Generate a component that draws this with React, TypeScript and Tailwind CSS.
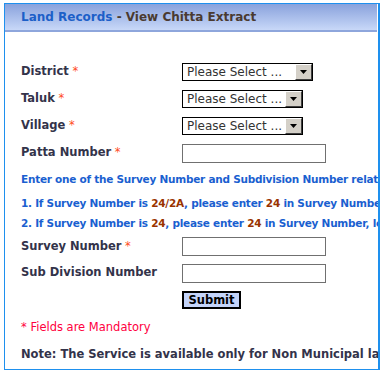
import React from 'react'

const font = { fontFamily: '"DejaVu Sans", Verdana, sans-serif' }

function Star() {
  return <span className="text-[#ff4a1c] font-normal"> *</span>
}

function FakeSelect({ width }: { width: string }) {
  return (
    <div className={`flex h-[18px] ${width} items-stretch border border-black bg-white`}>
      <span className="flex-1 pl-[4px] text-[12px] leading-[16px] text-[#333]">Please Select ...</span>
      <span className="flex w-[17px] items-center justify-center border-t border-l border-t-white border-l-white border-r border-b border-r-[#404040] border-b-[#404040] bg-[#d4d0c8]">
        <svg width="7" height="4" viewBox="0 0 7 4">
          <polygon points="0,0 7,0 3.5,4" fill="#000" />
        </svg>
      </span>
    </div>
  )
}

function TextBox() {
  return <div className="h-[19px] w-[144px] border border-[#707070] bg-white" />
}

function Row({ label, star, h, children }: { label: string; star?: boolean; h: string; children?: React.ReactNode }) {
  return (
    <div className={`flex ${h} items-center pt-[1px]`}>
      <div className="w-[161px] text-[11.5px] font-bold text-[#33334a]">
        {label}
        {star && <Star />}
      </div>
      {children}
    </div>
  )
}

const Num = ({ children }: { children: React.ReactNode }) => <span className="text-[#993300]">{children}</span>

export default function App() {
  return (
    <div className="h-[375px] w-[384px] bg-white pt-[3px] pl-[4px]" style={font}>
      <div className="h-[367px] w-[376px] overflow-hidden border border-r-2 border-[#1e90ee]">
        <div className="flex h-[28px] w-[372px] items-center border-b-2 border-[#8ea6dc] bg-gradient-to-b from-[#8aa2dc] to-[#c8d8f8] pl-[16px] text-[12px] font-bold">
          <span className="text-[#1c5fc8]">Land Records</span>
          <span className="whitespace-pre text-[#4a3a30]"> - View Chitta Extract</span>
        </div>
        <div className="pt-[26px] pl-[16px] whitespace-nowrap">
          <Row label="District" star h="h-[27px]"><FakeSelect width="w-[131px]" /></Row>
          <Row label="Taluk" star h="h-[27px]"><FakeSelect width="w-[121px]" /></Row>
          <Row label="Village" star h="h-[27px]"><FakeSelect width="w-[121px]" /></Row>
          <Row label="Patta Number" star h="h-[27px]"><TextBox /></Row>
          <div className="flex h-[27px] items-center text-[10.5px] tracking-[-0.25px] font-bold text-[#1a5fd0]">
            Enter one of the Survey Number and Subdivision Number relating to the Patta
          </div>
          <div className="flex h-[21px] items-center text-[10.5px] tracking-[-0.25px] font-bold text-[#1a5fd0]">
            <span>1. If Survey Number is <Num>24/2A</Num>, please enter <Num>24</Num> in Survey Number and <Num>2A</Num> in Sub Division Number</span>
          </div>
          <div className="flex h-[19px] items-center text-[10.5px] tracking-[-0.25px] font-bold text-[#1a5fd0]">
            <span>2. If Survey Number is <Num>24</Num>, please enter <Num>24</Num> in Survey Number, leave Sub Division Number blank</span>
          </div>
          <Row label="Survey Number" star h="h-[26px]"><TextBox /></Row>
          <Row label="Sub Division Number" h="h-[27px]"><TextBox /></Row>
          <div className="flex h-[28px] items-center pl-[161px]">
            <button className="h-[18px] w-[59px] border-2 border-black bg-[#c4d4fa] text-[11.5px] leading-[14px] font-bold text-black">
              Submit
            </button>
          </div>
          <div className="flex h-[28px] items-center text-[11.5px] text-[#ff0040]">* Fields are Mandatory</div>
          <div className="flex h-[26px] items-center text-[11.5px] font-bold text-[#33334a]">
            Note: The Service is available only for Non Municipal lands
          </div>
        </div>
      </div>
    </div>
  )
}
